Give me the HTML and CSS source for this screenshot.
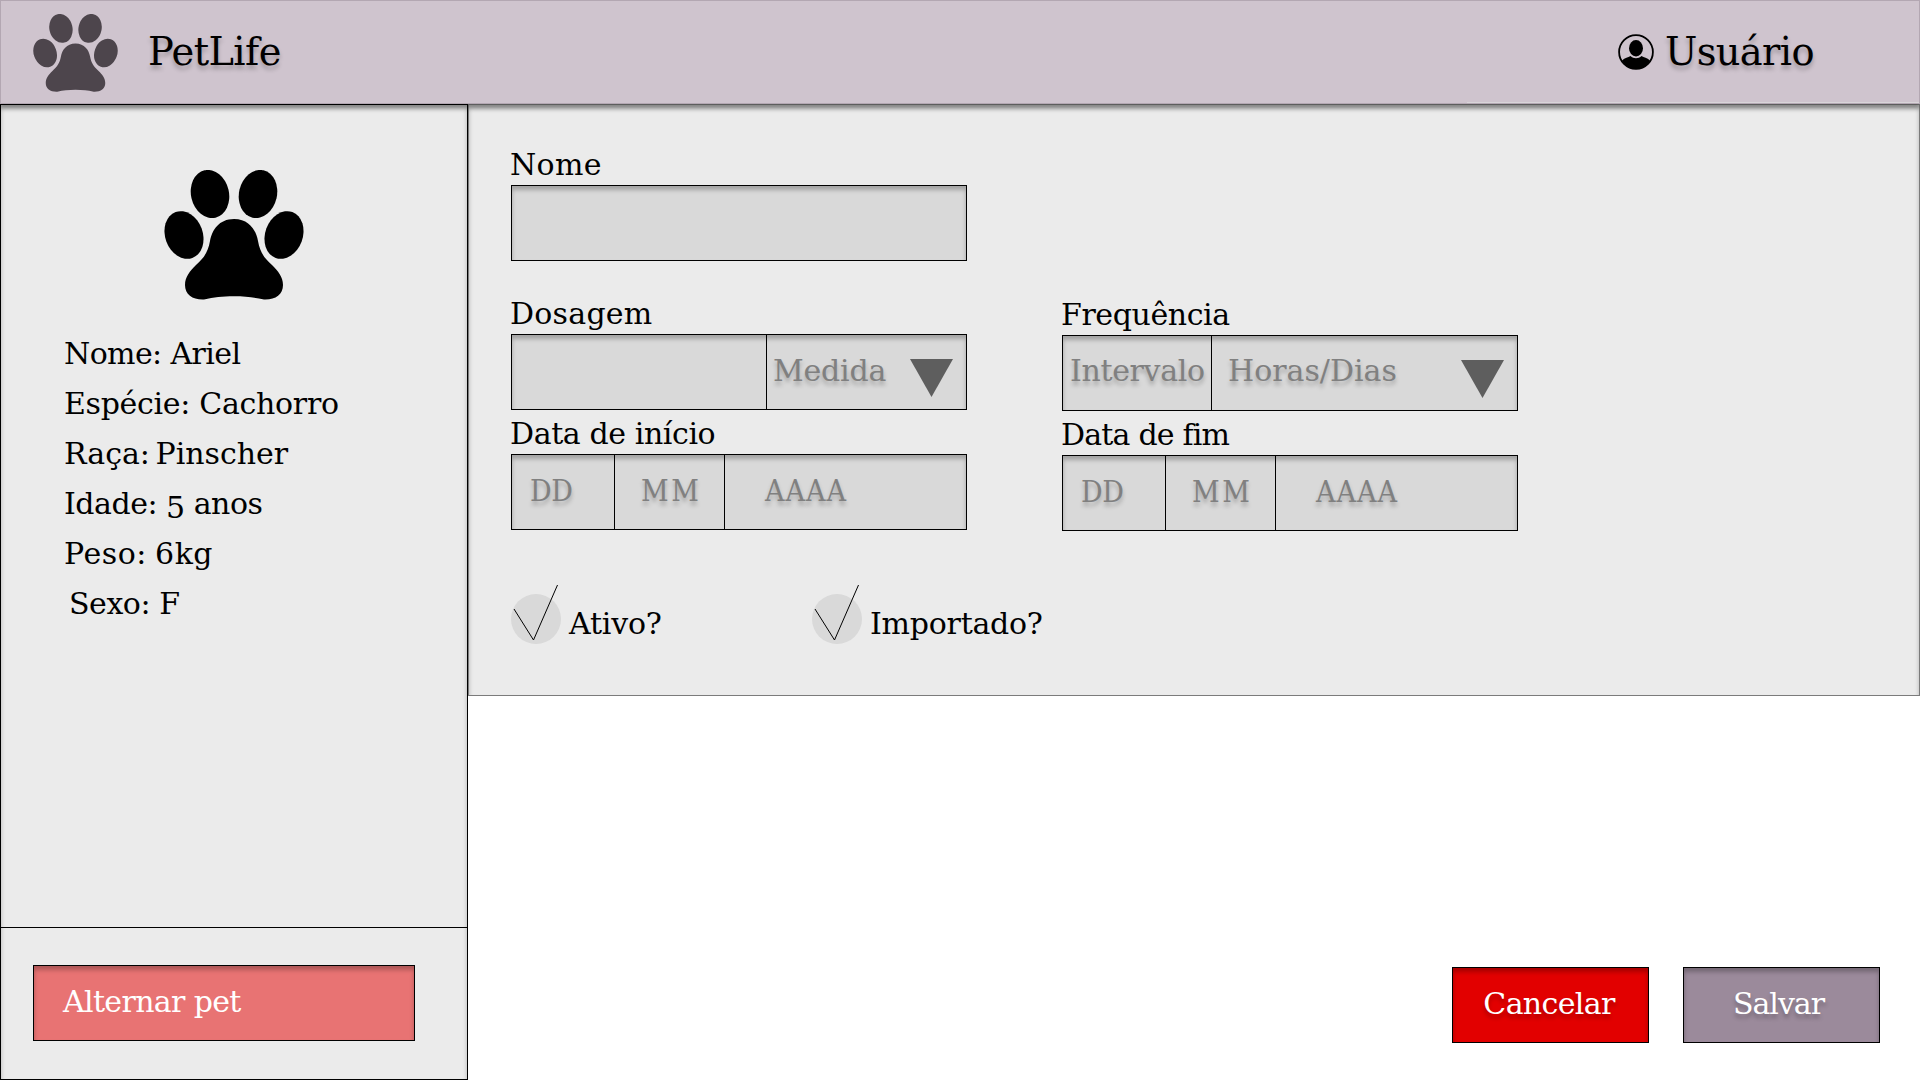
FILE: index.html
```html
<!DOCTYPE html>
<html lang="pt-BR">
<head>
<meta charset="utf-8">
<title>PetLife</title>
<link rel="stylesheet" href="styles.css">
</head>
<body>
<svg class="defs" aria-hidden="true">
  <symbol id="paw" viewBox="0 0 140 130" preserveAspectRatio="none">
    <ellipse cx="46" cy="24" rx="19" ry="24.3" transform="rotate(-13 46 24)"/>
    <ellipse cx="94" cy="24" rx="19" ry="24.3" transform="rotate(13 94 24)"/>
    <ellipse cx="20" cy="65" rx="18.8" ry="24.4" transform="rotate(-20 20 65)"/>
    <ellipse cx="120" cy="65" rx="18.8" ry="24.4" transform="rotate(20 120 65)"/>
    <path d="M70 49C85 49 92 60 94 71C96 82 100 88 108 95C114 101 119 107 119 115C119 125 111 130 100 129.500C90 127.500 82 126.300 70 126.300C58 126.300 50 127.500 40 129.500C29 130 21 125 21 115C21 107 26 101 32 95C40 88 44 82 46 71C48 60 55 49 70 49Z"/>
  </symbol>
</svg>

<header class="topbar">
  <svg class="topbar-paw"><use href="#paw"/></svg>
  <span class="brand">PetLife</span>
  <svg class="avatar" viewBox="0 0 36 36">
    <circle cx="18" cy="18" r="16.900" fill="none" stroke="#000" stroke-width="1.800"/>
    <ellipse cx="18" cy="14.300" rx="7" ry="8.200"/>
    <path d="M4 26.500C7 23.800 10 23.400 12.500 22C15.500 25 20.500 25 23.500 22C26 23.400 29 23.800 32 26.500C29 32 24 35 18 35C12 35 7 32 4 26.500Z"/>
  </svg>
  <span class="user">Usuário</span>
</header>

<div class="page">
  <aside class="sidebar">
    <div class="pet">
      <svg class="pet-paw"><use href="#paw"/></svg>
      <ul class="pet-info">
        <li class="pet-name">Nome: Ariel</li>
        <li class="pet-species">Espécie: Cachorro</li>
        <li class="pet-breed">Raça: Pinscher</li>
        <li class="pet-age">Idade: <span class="low">5</span> anos</li>
        <li class="pet-weight">Peso: 6kg</li>
        <li class="pet-sex">Sexo: F</li>
      </ul>
    </div>
    <div class="switch">
      <button class="btn btn-switch">Alternar pet</button>
    </div>
  </aside>

  <main class="content">
    <form class="panel">
      <div class="columns">
        <div class="col">
          <div class="field field-name">
            <label class="l-name">Nome</label>
            <div class="box"></div>
          </div>
          <div class="field">
            <label class="l-dose">Dosagem</label>
            <div class="box">
              <span class="cell dose"></span>
              <span class="cell unit">Medida<svg class="arrow" viewBox="0 0 43 38"><path d="M0 0H43L21.500 38Z"/></svg></span>
            </div>
          </div>
          <div class="field">
            <label class="l-start">Data de início</label>
            <div class="box date">
              <span class="cell day">DD</span>
              <span class="cell month">MM</span>
              <span class="cell year">AAAA</span>
            </div>
          </div>
        </div>
        <div class="col col-right">
          <div class="field">
            <label class="l-freq">Frequência</label>
            <div class="box freq">
              <span class="cell interval">Intervalo</span>
              <span class="cell period">Horas/Dias<svg class="arrow" viewBox="0 0 43 38"><path d="M0 0H43L21.500 38Z"/></svg></span>
            </div>
          </div>
          <div class="field">
            <label class="l-end">Data de fim</label>
            <div class="box date">
              <span class="cell day">DD</span>
              <span class="cell month">MM</span>
              <span class="cell year">AAAA</span>
            </div>
          </div>
        </div>
      </div>
      <div class="checks">
        <div class="check check-active">
          <svg class="tick" viewBox="0 0 50 60"><circle cx="25" cy="35" r="25" fill="#d9d9d9"/><path d="M3 25L22.500 56L46.500 1" fill="none" stroke="#000"/></svg>
          <span>Ativo?</span>
        </div>
        <div class="check check-imported">
          <svg class="tick" viewBox="0 0 50 60"><circle cx="25" cy="35" r="25" fill="#d9d9d9"/><path d="M3 25L22.500 56L46.500 1" fill="none" stroke="#000"/></svg>
          <span>Importado?</span>
        </div>
      </div>
    </form>
    <div class="actions">
      <button class="btn btn-cancel">Cancelar</button>
      <button class="btn btn-save">Salvar</button>
    </div>
  </main>
</div>
</body>
</html>
```
FILE: styles.css
```css
* { box-sizing: border-box; }

body {
  margin: 0;
  width: 1920px;
  height: 1080px;
  overflow: hidden;
  background: #fff;
  color: #000;
  font: 30px "DejaVu Serif", serif;
  display: flex;
  flex-direction: column;
}

.defs { display: none; }

.topbar {
  position: relative;
  z-index: 1;
  flex: none;
  height: 104px;
  display: flex;
  padding: 0 105px 0 32px;
  background: linear-gradient(#d9d5d9, #d9d5d9) right bottom / 452px 1px no-repeat #cfc4ce;
  border: 1px solid #b3a7b2;
  box-shadow: 0 4px 4px rgba(0, 0, 0, .25);
  font-size: 38.4px;
  line-height: 101px;
}
.topbar-paw { width: 85px; height: 78px; margin-top: 13px; fill: #4d454c; }
.brand { margin-left: 30px; letter-spacing: -.6px; text-shadow: 0 4px 4px rgba(0, 0, 0, .25); }
.avatar { width: 36px; height: 36px; margin: 33px 11px 0 auto; }
.user { width: 149px; white-space: nowrap; letter-spacing: -.65px; text-shadow: 0 4px 4px rgba(0, 0, 0, .25); }

.page { flex: 1; display: flex; }

.sidebar {
  width: 468px;
  display: flex;
  flex-direction: column;
  background: #ebebeb;
  border: 1px solid #000;
  box-shadow: inset 0 4px 4px rgba(0, 0, 0, .25);
}
.pet { height: 822px; padding: 65px 0 0 63px; }
.pet-paw { display: block; width: 140px; height: 130px; margin-left: 100px; }
.pet-info { list-style: none; margin: 29px 0 0; padding: 0; line-height: 50px; }
.pet-name { letter-spacing: -.6px; }
.pet-species { letter-spacing: -.3px; }
.pet-breed { letter-spacing: 0; word-spacing: -4px; }
.pet-age { letter-spacing: -.5px; }
.pet-weight { letter-spacing: .55px; word-spacing: -2px; }
.pet-sex { letter-spacing: -.45px; padding-left: 5px; }
.low { position: relative; top: 4px; }

.switch { flex: 1; padding: 37px 32px; border-top: 1px solid #000; }

.btn {
  width: 197px;
  height: 76px;
  padding: 0 0 3px;
  border: 1px solid #000;
  border-radius: 0;
  color: #fff;
  font: inherit;
  line-height: 70px;
  box-shadow: inset 0 4px 4px rgba(0, 0, 0, .25);
}
.btn-switch { display: block; width: 382px; padding-left: 29px; text-align: left; background: #e87373; letter-spacing: -.65px; }
.btn-cancel { padding-right: 3px; background: #e20000; letter-spacing: -.65px; text-shadow: 0 4px 4px rgba(0, 0, 0, .25); }
.btn-save { padding-right: 6px; background: #9b8a9b; letter-spacing: -1px; text-shadow: 0 4px 4px rgba(0, 0, 0, .25); }

.content { flex: 1; display: flex; flex-direction: column; justify-content: space-between; }

.panel {
  height: 592px;
  padding: 40px 0 0 42px;
  background: #ebebeb;
  border: 1px solid #7b7b7b;
  box-shadow: inset 0 4px 4px rgba(0, 0, 0, .25);
}
.columns { display: flex; gap: 95px; }
.col { width: 456px; display: flex; flex-direction: column; gap: 4px; }
.col-right { padding-top: 150px; }
.field-name { margin-bottom: 29px; }

.field label { display: block; height: 40px; line-height: 39px; margin-left: -1px; white-space: nowrap; }
.l-name { letter-spacing: .3px; }
.l-dose { letter-spacing: .25px; }
.l-start { letter-spacing: -.4px; }
.l-freq { letter-spacing: -.4px; }
.l-end { letter-spacing: -.8px; }

.box {
  height: 76px;
  display: flex;
  background: #d9d9d9;
  border: 1px solid #000;
  box-shadow: inset 0 4px 4px rgba(0, 0, 0, .25);
  color: #808080;
  line-height: 72px;
  text-shadow: 0 4px 4px rgba(0, 0, 0, .25);
}
.cell { display: flex; white-space: nowrap; }
.cell + .cell { border-left: 1px solid #000; }
.arrow { width: 43px; height: 38px; margin: 24px 13px 0 auto; fill: #5e5e5e; }
.dose { width: 254px; }
.unit { flex: 1; padding-left: 6px; letter-spacing: -.2px; }
.freq { line-height: 70px; }
.interval { width: 148px; padding-left: 7px; letter-spacing: -.35px; }
.period { flex: 1; padding-left: 16px; }
.date { font-family: "DejaVu Serif Condensed", "DejaVu Serif", serif; }
.day { width: 102px; padding-left: 18px; letter-spacing: -.5px; }
.month { width: 110px; padding-left: 26px; letter-spacing: 2.500px; }
.year { flex: 1; padding-left: 40px; letter-spacing: 1px; }

.checks { display: flex; margin-top: 53px; }
.check { display: flex; line-height: 79px; }
.check-active { width: 301px; letter-spacing: -.2px; }
.check-imported { letter-spacing: -.25px; }
.tick { width: 50px; height: 60px; margin-right: 8px; overflow: visible; }

.actions { display: flex; justify-content: flex-end; gap: 34px; padding: 0 40px 37px 0; }
```
